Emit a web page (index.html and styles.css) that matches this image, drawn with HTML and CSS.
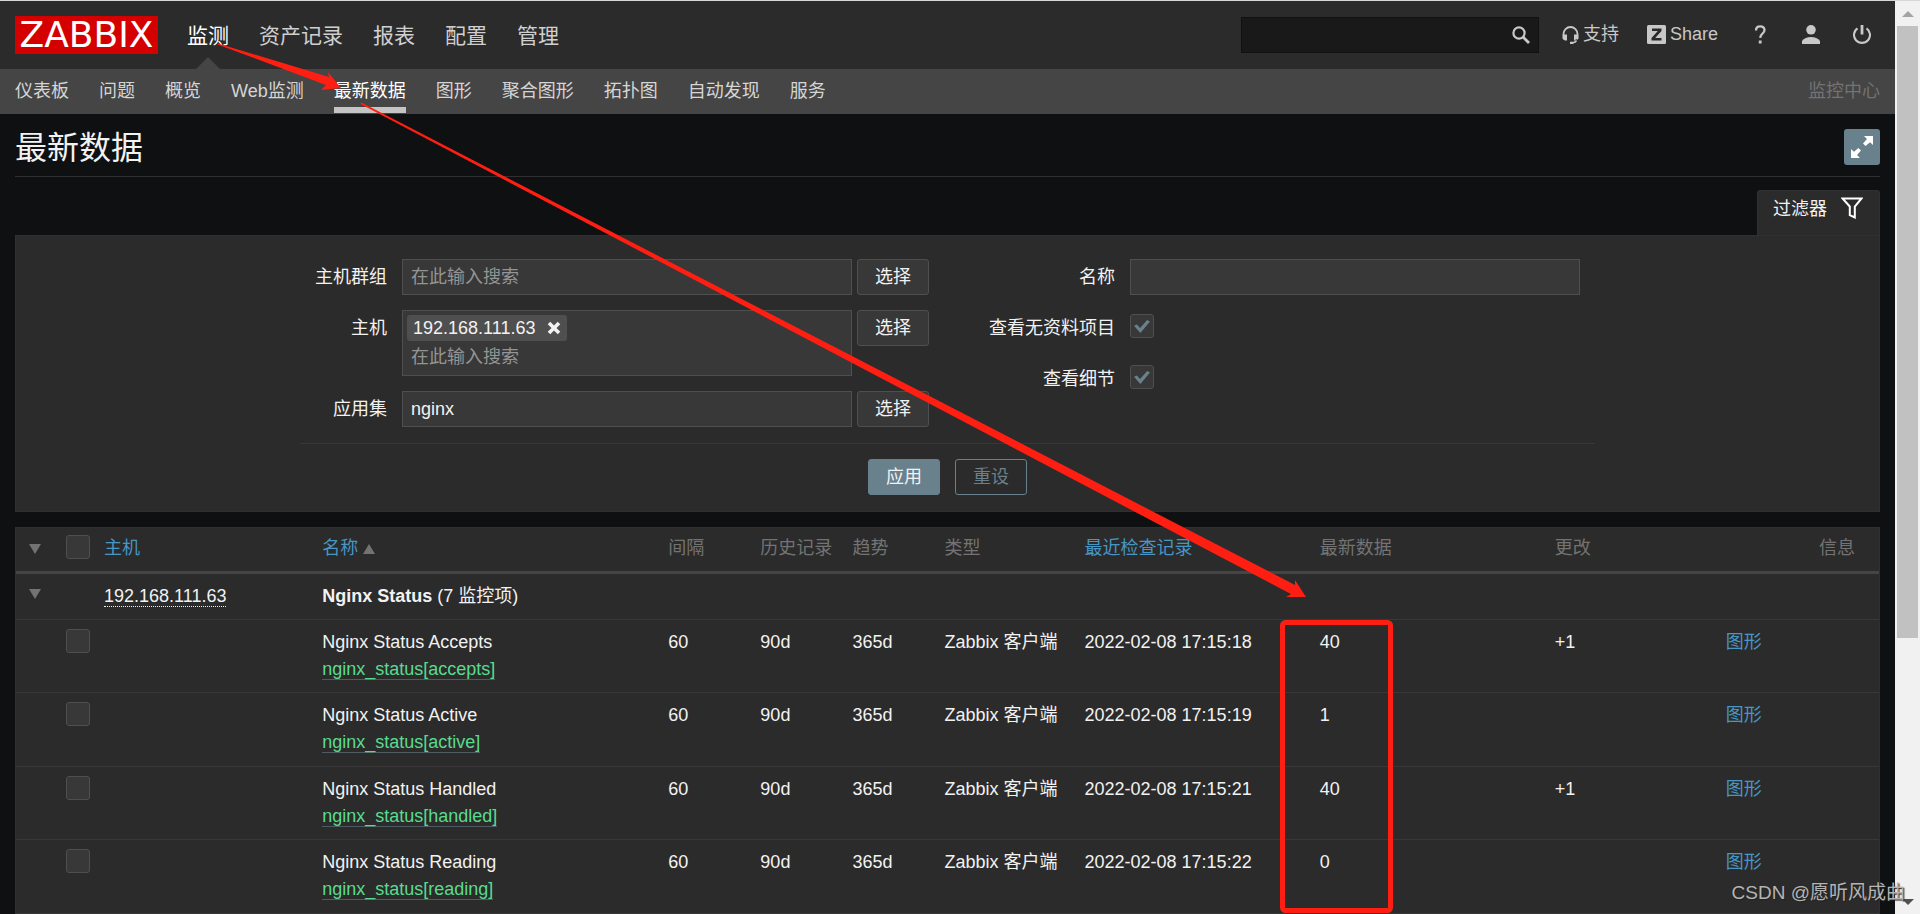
FILE: index.html
```html
<!DOCTYPE html>
<html lang="zh-CN">
<head>
<meta charset="utf-8">
<title>最新数据</title>
<link rel="stylesheet" href="styles.css">
</head>
<body>
<div class="window">
  <div class="page">
    <header class="top">
      <a class="logo" href="#">ZABBIX</a>
      <nav class="main-nav">
        <a class="active" href="#">监测</a>
        <a href="#">资产记录</a>
        <a href="#">报表</a>
        <a href="#">配置</a>
        <a href="#">管理</a>
      </nav>
      <form class="search">
        <input type="text" aria-label="搜索">
        <button type="button" aria-label="搜索">
          <svg width="18" height="18" viewBox="0 0 18 18"><circle cx="7" cy="7" r="5.6" fill="none" stroke="#c8c8c8" stroke-width="2.2"/><path d="M11 11l6 6" stroke="#c8c8c8" stroke-width="2.8"/></svg>
        </button>
      </form>
      <div class="tools">
        <a href="#"><svg width="17" height="18" viewBox="0 0 17 18"><path d="M1.5 13V8a7 7 0 0 1 14 0v5" fill="none" stroke="#c8c8c8" stroke-width="1.8"/><path d="M.8 8.500H5v6H3.200Q.8 14 .8 12zM16.200 8.500H12v6h1.800Q16.200 14 16.200 12zM14.800 13v2.500q-.8 1.700-3.300 1.700v1H8v-2.400h3.500q1.800 0 2-2.300z" fill="#c8c8c8"/></svg>支持</a>
        <a href="#"><svg width="19" height="19" viewBox="0 0 19 19"><rect width="19" height="19" rx="1.500" fill="#c8c8c8"/><path d="M5 3.500h9.500v2.600L8.200 13h6.300v2.600H4.500V13L10.800 6.100H5z" fill="#2b2b2b"/></svg>Share</a>
      </div>
      <div class="user-tools">
        <a href="#" aria-label="帮助"><svg width="18" height="19" viewBox="0 0 18 19"><path d="M5 5.500Q5 1.300 9.200 1.300T13.500 5q0 2-2 3.600T9.200 12.800" fill="none" stroke="#c8c8c8" stroke-width="2.300"/><rect x="7.800" y="15.500" width="2.800" height="3" fill="#c8c8c8"/></svg></a>
        <a href="#" aria-label="用户"><svg width="18" height="19" viewBox="0 0 18 19"><circle cx="9" cy="4.800" r="4.800" fill="#c8c8c8"/><path d="M0 19v-3q3-4 9-4t9 4v3z" fill="#c8c8c8"/></svg></a>
        <a href="#" aria-label="退出"><svg width="18" height="19" viewBox="0 0 18 19"><path d="M4.500 3.300a8 8 0 1 0 9 0" fill="none" stroke="#c8c8c8" stroke-width="2.100"/><path d="M9 0v9.500" stroke="#c8c8c8" stroke-width="2.800"/></svg></a>
      </div>
    </header>
    <nav class="sub-nav">
      <a href="#">仪表板</a>
      <a href="#">问题</a>
      <a href="#">概览</a>
      <a href="#">Web监测</a>
      <a class="active" href="#">最新数据</a>
      <a href="#">图形</a>
      <a href="#">聚合图形</a>
      <a href="#">拓扑图</a>
      <a href="#">自动发现</a>
      <a href="#">服务</a>
      <span class="server">监控中心</span>
    </nav>
    <main>
      <div class="title-bar">
        <h1>最新数据</h1>
        <button class="fullscreen" type="button" aria-label="全屏">
          <svg width="22" height="22" viewBox="0 0 22 22" fill="#fff"><path d="M13 0h9v9l-3-2.800L14.600 10 12 7.400 16 3z"/><path d="M9 22H0v-9l3 2.800L7.400 12 10 14.600 6 19z"/></svg>
        </button>
      </div>
      <div class="tabs">
        <button class="tab" type="button">过滤器
          <svg width="22" height="22" viewBox="0 0 22 22"><path d="M1.500 1.500h19L13.800 9.500V20.500L8.800 18.200V9.500z" fill="none" stroke="#fff" stroke-width="2"/></svg>
        </button>
      </div>
      <form class="filter">
        <div class="filter-fields">
          <div class="fields left">
            <label for="groups">主机群组</label>
            <div class="control"><input class="text" id="groups" type="text" placeholder="在此输入搜索"><button class="btn" type="button">选择</button></div>
            <label for="hosts">主机</label>
            <div class="control">
              <div class="multi">
                <span class="tag">192.168.111.63
                  <button type="button" aria-label="移除"><svg width="14" height="14" viewBox="0 0 14 14"><path d="M2 2l10 10M12 2L2 12" stroke="#f2f2f2" stroke-width="3.600"/></svg></button>
                </span>
                <input id="hosts" type="text" placeholder="在此输入搜索">
              </div>
              <button class="btn" type="button">选择</button>
            </div>
            <label for="apps">应用集</label>
            <div class="control"><input class="text" id="apps" type="text" value="nginx"><button class="btn" type="button">选择</button></div>
          </div>
          <div class="fields right">
            <label for="name">名称</label>
            <div class="control"><input class="text" id="name" type="text"></div>
            <label for="nodata">查看无资料项目</label>
            <div class="control check-row"><input class="check" id="nodata" type="checkbox" checked></div>
            <label for="details">查看细节</label>
            <div class="control check-row"><input class="check" id="details" type="checkbox" checked></div>
          </div>
        </div>
        <div class="filter-actions">
          <button class="btn primary" type="button">应用</button>
          <button class="btn outline" type="button">重设</button>
        </div>
      </form>
      <div class="table-box">
        <table>
          <colgroup>
            <col class="c-toggle"><col class="c-check"><col class="c-host"><col class="c-name"><col class="c-num"><col class="c-num"><col class="c-num"><col class="c-type"><col class="c-time"><col class="c-data"><col class="c-change"><col class="c-link"><col class="c-info">
          </colgroup>
          <thead>
            <tr>
              <th><button class="toggle" type="button" aria-label="全部折叠"></button></th>
              <th><input class="check" type="checkbox" aria-label="全选"></th>
              <th><a href="#">主机</a></th>
              <th><a href="#">名称<span class="asc"></span></a></th>
              <th>间隔</th><th>历史记录</th><th>趋势</th><th>类型</th>
              <th><a href="#">最近检查记录</a></th>
              <th>最新数据</th><th>更改</th><th></th><th>信息</th>
            </tr>
          </thead>
          <tbody>
            <tr class="group">
              <td><button class="toggle" type="button" aria-label="折叠"></button></td>
              <td></td>
              <td><a class="host" href="#">192.168.111.63</a></td>
              <td colspan="10"><b>Nginx Status</b> (7 监控项)</td>
            </tr>
            <tr>
              <td></td><td><input class="check" type="checkbox" aria-label="Nginx Status Accepts"></td><td></td>
              <td>Nginx Status Accepts<br><a class="key" href="#">nginx_status[accepts]</a></td>
              <td>60</td><td>90d</td><td>365d</td><td>Zabbix 客户端</td><td>2022-02-08 17:15:18</td><td>40</td><td>+1</td><td><a href="#">图形</a></td><td></td>
            </tr>
            <tr>
              <td></td><td><input class="check" type="checkbox" aria-label="Nginx Status Active"></td><td></td>
              <td>Nginx Status Active<br><a class="key" href="#">nginx_status[active]</a></td>
              <td>60</td><td>90d</td><td>365d</td><td>Zabbix 客户端</td><td>2022-02-08 17:15:19</td><td>1</td><td></td><td><a href="#">图形</a></td><td></td>
            </tr>
            <tr>
              <td></td><td><input class="check" type="checkbox" aria-label="Nginx Status Handled"></td><td></td>
              <td>Nginx Status Handled<br><a class="key" href="#">nginx_status[handled]</a></td>
              <td>60</td><td>90d</td><td>365d</td><td>Zabbix 客户端</td><td>2022-02-08 17:15:21</td><td>40</td><td>+1</td><td><a href="#">图形</a></td><td></td>
            </tr>
            <tr>
              <td></td><td><input class="check" type="checkbox" aria-label="Nginx Status Reading"></td><td></td>
              <td>Nginx Status Reading<br><a class="key" href="#">nginx_status[reading]</a></td>
              <td>60</td><td>90d</td><td>365d</td><td>Zabbix 客户端</td><td>2022-02-08 17:15:22</td><td>0</td><td></td><td><a href="#">图形</a></td><td></td>
            </tr>
          </tbody>
        </table>
      </div>
    </main>
  </div>
  <div class="scrollbar">
    <span class="arrow-up"></span>
    <span class="thumb"></span>
    <span class="arrow-down"></span>
  </div>
  <svg class="marks" width="1920" height="914" viewBox="0 0 1920 914">
    <path d="M218 43.500L329 77 328 72 341 88 321 90 326 85 217.500 44.500z" fill="#ff1f12"/>
    <path d="M361.500 102.500L1295 585 1295 580 1306 597 1286 597 1291 594 360.500 104z" fill="#ff1f12"/>
    <rect x="1282.500" y="622.500" width="108" height="288" rx="3" fill="none" stroke="#ff1f12" stroke-width="5"/>
  </svg>
  <div class="watermark">CSDN @愿听风成曲</div>
</div>
</body>
</html>
```
FILE: styles.css
```css
* { box-sizing: border-box; }

body {
  margin: 0;
  background: #0e1012;
  color: #f2f2f2;
  font: 18px/27px "Liberation Sans", "Noto Sans CJK SC", sans-serif;
}

a { color: #4796c4; text-decoration: none; }
button, input { font: inherit; color: inherit; }
button { padding: 0; border: 0; background: none; }
svg { display: block; flex: none; }

.window {
  position: relative;
  display: flex;
  height: 100vh;
  overflow: hidden;
  border-top: 1px solid #d5d8d8;
}

.page { flex: 1; min-width: 0; }

/* header */
.top {
  display: flex;
  align-items: center;
  height: 68px;
  padding: 0 24px 0 15px;
  background: #2b2b2b;
}

.logo {
  width: 143px;
  height: 38px;
  background: #d40000;
  color: #fff;
  font-family: "DejaVu Sans", sans-serif;
  font-size: 36px;
  line-height: 38px;
  text-align: center;
}

.main-nav {
  display: flex;
  align-self: stretch;
  gap: 30px;
  margin-left: 29px;
  font-size: 21px;
  line-height: 70px;
}
.main-nav a { color: #d0d0d0; }
.main-nav .active { position: relative; color: #fff; }
.main-nav .active::after {
  content: "";
  position: absolute;
  bottom: 0;
  left: 50%;
  margin-left: -12px;
  border: 12px solid transparent;
  border-top: 0;
  border-bottom-color: #454545;
}

.search {
  display: flex;
  align-items: center;
  width: 298px;
  height: 36px;
  margin-left: auto;
  padding-right: 8px;
  background: #191919;
  border: 1px solid #111;
}
.search input {
  flex: 1;
  min-width: 0;
  border: 0;
  background: none;
}

.tools, .user-tools { display: flex; align-items: center; }
.tools { gap: 28px; margin-left: 23px; }
.tools a { display: flex; align-items: center; gap: 4px; color: #c8c8c8; }
.user-tools { gap: 33px; margin-left: 33px; }
.search, .tools, .user-tools { margin-bottom: 1px; }

.sub-nav {
  display: flex;
  gap: 30px;
  height: 45px;
  padding: 0 15px;
  background: #454545;
  line-height: 44px;
}
.sub-nav a { color: #d5d5d5; }
.sub-nav .active {
  height: 44px;
  border-bottom: 6px solid #c4c4c4;
  color: #fff;
}
.server { margin-left: auto; color: #737373; }

/* content */
main { padding: 0 15px; }

.title-bar {
  display: flex;
  align-items: flex-start;
  justify-content: space-between;
  height: 63px;
  padding-top: 15px;
  border-bottom: 1px solid #303030;
}
h1 { margin: 0; font-size: 32px; line-height: 38px; font-weight: 400; }
.fullscreen {
  display: grid;
  place-items: center;
  width: 36px;
  height: 36px;
  border-radius: 3px;
  background: #69808d;
}

.tabs { display: flex; justify-content: flex-end; padding-top: 13px; }
.tab {
  display: flex;
  gap: 14px;
  height: 45px;
  padding: 5px 16px 0 15px;
  border: 1px solid #303030;
  border-bottom: 0;
  border-radius: 3px 3px 0 0;
  background: #2b2b2b;
}
.tab svg { margin-top: 1px; }

.filter {
  padding: 23px 0 16px;
  border: 1px solid #303030;
  background: #2b2b2b;
}
.filter-fields, .filter-actions { width: 1295px; margin: 0 auto; }
.filter-fields {
  display: flex;
  justify-content: space-between;
  padding: 0 15px 16px 0;
  border-bottom: 1px solid #383838;
}
.fields {
  display: grid;
  grid-template-columns: auto auto;
  gap: 15px;
  align-content: start;
}
.left { grid-template-columns: 87px auto; }
.fields label { line-height: 36px; text-align: right; white-space: nowrap; }
.control { display: flex; align-items: flex-start; gap: 5px; }
.check-row { height: 36px; padding-top: 4px; }

.text, .multi {
  width: 450px;
  border: 1px solid #4f4f4f;
  background: #383838;
}
.text { height: 36px; padding: 0 8px; }
.multi { padding: 4px 4px 2px; }
.multi input {
  display: block;
  width: 100%;
  height: 32px;
  padding: 0 4px;
  border: 0;
  background: none;
}
::placeholder { color: #949494; opacity: 1; }

.tag {
  display: flex;
  align-items: center;
  gap: 12px;
  width: max-content;
  padding: 0 6px;
  border-radius: 3px;
  background: #4f4f4f;
  line-height: 26px;
}

.btn {
  width: 72px;
  height: 36px;
  border: 1px solid #4f4f4f;
  border-radius: 3px;
  background: #383838;
}
.primary { border-color: #69808d; background: #69808d; }
.outline { border-color: #69808d; background: none; color: #69808d; }

.filter-actions {
  display: flex;
  justify-content: center;
  gap: 15px;
  padding-top: 15px;
}

.check {
  appearance: none;
  display: block;
  width: 24px;
  height: 24px;
  margin: 0;
  border: 1px solid #4f4f4f;
  border-radius: 3px;
  background: #383838;
}
.check:checked::before {
  content: "";
  display: block;
  width: 16px;
  height: 13px;
  margin: 5px 3px;
  background: #69808d;
  clip-path: polygon(0 45%, 18% 35%, 38% 62%, 82% 0, 100% 12%, 40% 100%);
}

/* table */
.table-box {
  margin-top: 15px;
  border: 1px solid #303030;
  background: #2b2b2b;
}
table { width: 100%; table-layout: fixed; border-collapse: collapse; }
.c-toggle { width: 42px; }
.c-check { width: 38px; }
.c-host { width: 218px; }
.c-name { width: 346px; }
.c-num { width: 92px; }
.c-type { width: 140px; }
.c-time { width: 235px; }
.c-data { width: 235px; }
.c-change { width: 171px; }
.c-link { width: 93px; }
.c-info { width: 68px; }

th, td {
  padding: 9px 0 9px 8px;
  text-align: left;
  vertical-align: top;
  font-weight: 400;
  white-space: nowrap;
}
th {
  padding: 7px 0 9px 8px;
  border-bottom: 3px solid #454545;
  color: #737373;
}
td { border-bottom: 1px solid #383838; }
.group td { height: 47px; }
tbody tr:nth-child(odd):not(.group) td { height: 74px; }

.toggle {
  display: block;
  margin: 9px 0 0 5px;
  border: 6px solid transparent;
  border-top: 10px solid #737373;
  border-bottom: 0;
}
.group .toggle { margin-top: 6px; }
.asc {
  display: inline-block;
  margin-left: 5px;
  border: 6px solid transparent;
  border-bottom: 10px solid #737373;
  border-top: 0;
}
.host { border-bottom: 1px dotted #f2f2f2; color: #f2f2f2; }
.key { border-bottom: 1px solid #4f5b62; color: #59db8f; }

/* browser scrollbar */
.scrollbar {
  display: flex;
  flex-direction: column;
  align-items: center;
  width: 25px;
  background: #f1f1f1;
}
.arrow-up, .arrow-down { border: 6px solid transparent; }
.arrow-up { margin: 10px 0 9px; border-top: 0; border-bottom-color: #a3a3a3; }
.arrow-down { margin: auto 0 9px; border-bottom: 0; border-top-color: #505050; }
.thumb { width: 21px; height: 67%; background: #c1c1c1; }

/* annotations over the page */
.marks { position: absolute; top: -1px; left: 0; pointer-events: none; }
.watermark {
  position: absolute;
  right: 15px;
  bottom: 8px;
  color: #b4b4b4;
  font-family: "Liberation Sans", "Noto Sans CJK SC", sans-serif;
  font-size: 19px;
  text-shadow: 1px 1px 1px #222;
}
```
